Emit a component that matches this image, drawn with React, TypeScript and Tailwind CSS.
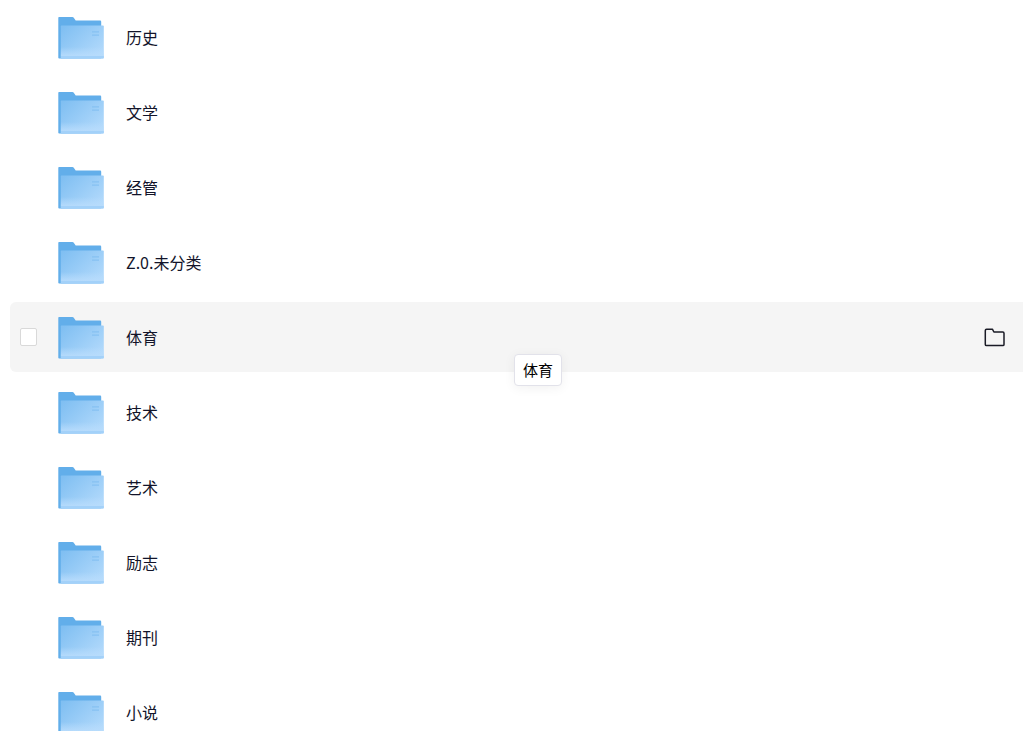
import React from "react";

interface Folder {
  id: number;
  name: string;
  hovered?: boolean;
}

const folders: Folder[] = [
  { id: 1, name: "历史" },
  { id: 2, name: "文学" },
  { id: 3, name: "经管" },
  { id: 4, name: "Z.0.未分类" },
  { id: 5, name: "体育", hovered: true },
  { id: 6, name: "技术" },
  { id: 7, name: "艺术" },
  { id: 8, name: "励志" },
  { id: 9, name: "期刊" },
  { id: 10, name: "小说" },
];

function FolderGradients() {
  return (
    <svg className="absolute h-0 w-0" aria-hidden="true">
      <defs>
        <linearGradient id="folder-front" x1="0" y1="0.1" x2="1" y2="0.9">
          <stop offset="0" stopColor="#80bff2" />
          <stop offset="1" stopColor="#b5dbfc" />
        </linearGradient>
        <linearGradient id="folder-shine" x1="0" y1="0" x2="0" y2="1">
          <stop offset="0" stopColor="#b8dcfc" stopOpacity="0" />
          <stop offset="1" stopColor="#b8dcfc" stopOpacity="0.9" />
        </linearGradient>
      </defs>
    </svg>
  );
}

function FolderIcon() {
  return (
    <svg className="h-12 w-12 shrink-0" viewBox="0 0 48 48" aria-hidden="true">
      <path
        d="M2.3 4H15.4c.6 0 1 .2 1.4.7L18.7 7.6H43c.7 0 1.2.5 1.2 1.2V45.6H2.5c-.7 0-1.2-.5-1.2-1.2V5c0-.6.4-1 1-1Z"
        fill="#62aeea"
      />
      <path
        d="M4.8 12.6h41c.6 0 1 .4 1 1v30.8c0 .6-.4 1-1 1H3.8V13.6c0-.6.4-1 1-1Z"
        fill="url(#folder-front)"
      />
      <path d="M3.8 34h43v9h-43Z" fill="url(#folder-shine)" />
      <path d="M3.8 43h43v1.4c0 .6-.4 1-1 1h-42Z" fill="#a3d1f9" />
      <path d="M35 18.8h7M35 22.2h7" stroke="#86c1f2" strokeWidth="1.2" />
    </svg>
  );
}

function OpenFolderButton() {
  return (
    <button type="button" aria-label="打开文件夹" className="ml-auto h-6 w-6 text-[#1a1b26]">
      <svg viewBox="0 0 24 24" className="h-6 w-6" fill="none" stroke="currentColor">
        <path
          d="M3.5 4.2H9.4l1.5 2.8h8.9c.8 0 1.2.5 1.2 1.2v11.2c0 .8-.5 1.2-1.2 1.2H3.5c-.8 0-1.2-.5-1.2-1.2V5.400c0-.8.5-1.200 1.200-1.200Z"
          strokeWidth="1.5"
          strokeLinejoin="round"
        />
      </svg>
    </button>
  );
}

function FolderRow({ folder }: { folder: Folder }) {
  return (
    <li
      className={`relative flex h-[70px] items-center rounded-l-md pr-4 pl-[10px] ${
        folder.hovered ? "bg-[#f5f5f5]" : ""
      }`}
    >
      <div className="flex w-[37px] shrink-0 items-center">
        {folder.hovered && (
          <input
            type="checkbox"
            aria-label={`选择 ${folder.name}`}
            className="h-[18px] w-[17px] appearance-none rounded-xs border border-[#d9d9d9] bg-white checked:bg-[#62aeea]"
          />
        )}
      </div>
      <FolderIcon />
      <a href={`#folder-${folder.id}`} className="ml-[21px] text-base leading-6 text-[#12142a]">
        {folder.name}
      </a>
      {folder.hovered && <OpenFolderButton />}
      {folder.hovered && (
        <div
          role="tooltip"
          className="absolute top-[52px] left-[504px] z-10 rounded-sm border border-[#e2e2ea] bg-white px-2 py-1 text-[15px] leading-[22px] text-black shadow-[0_2px_12px_rgba(0,0,0,0.06)]"
        >
          {folder.name}
        </div>
      )}
    </li>
  );
}

export default function App() {
  return (
    <main className="h-screen bg-white pb-[3px] font-['Noto_Sans_CJK_SC',sans-serif]">
      <FolderGradients />
      <div className="h-full overflow-hidden">
        <ul className="flex flex-col gap-[5px] pt-[2px] pl-[10px]">
          {folders.map((folder) => (
            <FolderRow key={folder.id} folder={folder} />
          ))}
        </ul>
      </div>
    </main>
  );
}
